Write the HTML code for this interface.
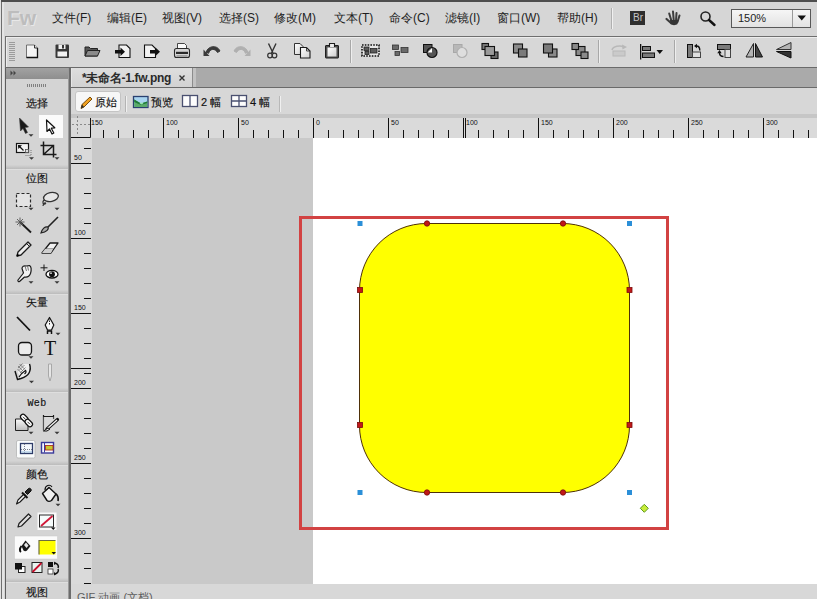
<!DOCTYPE html>
<html><head><meta charset="utf-8">
<style>
*{box-sizing:border-box}
html,body{margin:0;padding:0}
body{width:817px;height:599px;overflow:hidden;position:relative;background:#d5d5d5;font-family:"Liberation Sans",sans-serif;font-size:12px;color:#222}
.a{position:absolute}
.mi{position:absolute;top:11px;font-size:12px;line-height:14px;color:#1e1e1e;white-space:nowrap}
.lbl{position:absolute;left:6px;width:62px;text-align:center;font-size:11px;line-height:12px;color:#111;-webkit-text-stroke:0.15px #111}
.sep{position:absolute;left:6px;width:62px;height:5px;background:linear-gradient(#d3d3d3,#bcbcbc 78%,#dedede 78%)}
.rl{position:absolute;font-size:7px;line-height:8px;color:#111}
.sb{position:absolute;top:95px;font-size:11px;line-height:14px;color:#111;-webkit-text-stroke:0.15px #111;white-space:nowrap}
svg{position:absolute;left:0;top:0;overflow:visible}
</style></head><body>
<!-- frame -->
<div class="a" style="left:0;top:0;width:817px;height:36px;background:#d6d6d6"></div>
<div class="a" style="left:0;top:0;width:817px;height:2px;background:#4e4e4e"></div>
<div class="a" style="left:0;top:0;width:1px;height:599px;background:#e2e2e2"></div>
<div class="a" style="left:1px;top:2px;width:1px;height:597px;background:#6e6e6e"></div>
<div class="a" style="left:5px;top:36px;width:812px;height:31px;background:#d7d7d7;border-top:1px solid #6e6e6e;border-left:1px solid #6e6e6e"></div>
<div class="a" style="left:6px;top:37px;width:811px;height:1px;background:#ececec"></div>
<div class="a" style="left:6px;top:37px;width:1px;height:30px;background:#ececec"></div>
<div class="a" style="left:2px;top:2px;width:2px;height:597px;background:#e4e4e4"></div>
<div class="a" style="left:5px;top:67px;width:812px;height:1px;background:#6a6a6a"></div>
<!-- left panel -->
<div class="a" style="left:5px;top:68px;width:1px;height:531px;background:#5e5e5e"></div>
<div class="a" style="left:6px;top:68px;width:62px;height:531px;background:#d4d4d4"></div>
<div class="a" style="left:6px;top:68px;width:62px;height:11px;background:linear-gradient(#a2a2a2,#8e8e8e)"></div>
<div class="a" style="left:68px;top:68px;width:1px;height:531px;background:#9a9a9a"></div>
<div class="a" style="left:69px;top:68px;width:2px;height:531px;background:#6c6c6c"></div>
<!-- doc area -->
<div class="a" style="left:71px;top:68px;width:746px;height:19px;background:#aaaaaa"></div>
<div class="a" style="left:71px;top:68px;width:121px;height:19px;background:linear-gradient(#dedede,#d2d2d2)"></div>
<div class="a" style="left:71px;top:87px;width:746px;height:1px;background:#6a6a6a"></div>
<div class="a" style="left:192px;top:68px;width:1px;height:19px;background:#8c8c8c"></div>
<div class="a" style="left:71px;top:88px;width:746px;height:26px;background:#d7d7d7"></div>
<div class="a" style="left:71px;top:114px;width:746px;height:4px;background:#c6c6c6"></div>
<div class="a" style="left:71px;top:118px;width:746px;height:20px;background:#dadada"></div>
<div class="a" style="left:71px;top:138px;width:21px;height:446px;background:#dadada"></div>
<div class="a" style="left:92px;top:138px;width:221px;height:446px;background:#c9c9c9"></div>
<div class="a" style="left:313px;top:138px;width:504px;height:446px;background:#fff"></div>
<div class="a" style="left:71px;top:584px;width:746px;height:15px;background:#d8d8d8"></div>

<!-- menu -->
<div class="mi" style="left:52px">文件(F)</div>
<div class="mi" style="left:107px">编辑(E)</div>
<div class="mi" style="left:162px">视图(V)</div>
<div class="mi" style="left:219px">选择(S)</div>
<div class="mi" style="left:274px">修改(M)</div>
<div class="mi" style="left:334px">文本(T)</div>
<div class="mi" style="left:389px">命令(C)</div>
<div class="mi" style="left:445px">滤镜(I)</div>
<div class="mi" style="left:497px">窗口(W)</div>
<div class="mi" style="left:557px">帮助(H)</div>

<!-- left panel labels -->
<div class="lbl" style="top:97px">选择</div>
<div class="sep" style="top:165px"></div>
<div class="lbl" style="top:172px">位图</div>
<div class="sep" style="top:290px"></div>
<div class="lbl" style="top:296px">矢量</div>
<div class="sep" style="top:388px"></div>
<div class="lbl" style="top:398px;font-size:10px;letter-spacing:0.3px;font-family:'Liberation Mono',monospace">Web</div>
<div class="sep" style="top:461px"></div>
<div class="lbl" style="top:468px">颜色</div>
<div class="sep" style="top:578px"></div>
<div class="lbl" style="top:586px">视图</div>

<!-- canvas objects -->
<svg width="817" height="599" viewBox="0 0 817 599">
  <rect x="300.5" y="217.5" width="367" height="311" fill="none" stroke="#d24242" stroke-width="3"/>
  <rect x="359.5" y="223.5" width="270" height="269" rx="67" ry="67" fill="#ffff00" stroke="#4e3008" stroke-width="1"/>
  <g fill="#c01818" stroke="#7a0c0c" stroke-width="0.8">
    <rect x="357.5" y="287.5" width="5" height="5"/><rect x="357.5" y="422.5" width="5" height="5"/>
    <rect x="627" y="287.5" width="5" height="5"/><rect x="627" y="422.5" width="5" height="5"/>
    <circle cx="427" cy="223.5" r="2.7"/><circle cx="563" cy="223.5" r="2.7"/>
    <circle cx="427" cy="492.5" r="2.7"/><circle cx="563" cy="492.5" r="2.7"/>
  </g>
  <g fill="#2b8fd8">
    <rect x="357.5" y="221" width="5" height="5"/><rect x="627" y="221" width="5" height="5"/>
    <rect x="357.5" y="490" width="5" height="5"/><rect x="627" y="490" width="5" height="5"/>
  </g>
  <path d="M644.3 504.3 L648.3 508.3 L644.3 512.3 L640.3 508.3 Z" fill="#c8ec3a" stroke="#5f9a1c" stroke-width="1"/>
</svg>
<!-- rulers -->
<svg width="817" height="599" viewBox="0 0 817 599">
 <g fill="#111"><rect x="103" y="130" width="1" height="8"/><rect x="118" y="130" width="1" height="8"/><rect x="133" y="130" width="1" height="8"/><rect x="148" y="130" width="1" height="8"/><rect x="163" y="118" width="1" height="20"/><rect x="178" y="130" width="1" height="8"/><rect x="193" y="130" width="1" height="8"/><rect x="208" y="130" width="1" height="8"/><rect x="223" y="130" width="1" height="8"/><rect x="238" y="118" width="1" height="20"/><rect x="253" y="130" width="1" height="8"/><rect x="268" y="130" width="1" height="8"/><rect x="283" y="130" width="1" height="8"/><rect x="298" y="130" width="1" height="8"/><rect x="313" y="118" width="1" height="20"/><rect x="328" y="130" width="1" height="8"/><rect x="343" y="130" width="1" height="8"/><rect x="358" y="130" width="1" height="8"/><rect x="373" y="130" width="1" height="8"/><rect x="388" y="118" width="1" height="20"/><rect x="403" y="130" width="1" height="8"/><rect x="418" y="130" width="1" height="8"/><rect x="433" y="130" width="1" height="8"/><rect x="448" y="130" width="1" height="8"/><rect x="463" y="118" width="1" height="20"/><rect x="478" y="130" width="1" height="8"/><rect x="493" y="130" width="1" height="8"/><rect x="508" y="130" width="1" height="8"/><rect x="523" y="130" width="1" height="8"/><rect x="538" y="118" width="1" height="20"/><rect x="553" y="130" width="1" height="8"/><rect x="568" y="130" width="1" height="8"/><rect x="583" y="130" width="1" height="8"/><rect x="598" y="130" width="1" height="8"/><rect x="613" y="118" width="1" height="20"/><rect x="628" y="130" width="1" height="8"/><rect x="643" y="130" width="1" height="8"/><rect x="658" y="130" width="1" height="8"/><rect x="673" y="130" width="1" height="8"/><rect x="688" y="118" width="1" height="20"/><rect x="703" y="130" width="1" height="8"/><rect x="718" y="130" width="1" height="8"/><rect x="733" y="130" width="1" height="8"/><rect x="748" y="130" width="1" height="8"/><rect x="763" y="118" width="1" height="20"/><rect x="778" y="130" width="1" height="8"/><rect x="793" y="130" width="1" height="8"/><rect x="808" y="130" width="1" height="8"/><rect x="465" y="118" width="1" height="20"/><rect x="84" y="148" width="7" height="1"/><rect x="71" y="163" width="20" height="1"/><rect x="84" y="178" width="7" height="1"/><rect x="84" y="193" width="7" height="1"/><rect x="84" y="208" width="7" height="1"/><rect x="84" y="223" width="7" height="1"/><rect x="71" y="238" width="20" height="1"/><rect x="84" y="253" width="7" height="1"/><rect x="84" y="268" width="7" height="1"/><rect x="84" y="283" width="7" height="1"/><rect x="84" y="298" width="7" height="1"/><rect x="71" y="313" width="20" height="1"/><rect x="84" y="328" width="7" height="1"/><rect x="84" y="343" width="7" height="1"/><rect x="84" y="358" width="7" height="1"/><rect x="84" y="373" width="7" height="1"/><rect x="71" y="388" width="20" height="1"/><rect x="84" y="403" width="7" height="1"/><rect x="84" y="418" width="7" height="1"/><rect x="84" y="433" width="7" height="1"/><rect x="84" y="448" width="7" height="1"/><rect x="71" y="463" width="20" height="1"/><rect x="84" y="478" width="7" height="1"/><rect x="84" y="493" width="7" height="1"/><rect x="84" y="508" width="7" height="1"/><rect x="84" y="523" width="7" height="1"/><rect x="71" y="538" width="20" height="1"/><rect x="84" y="553" width="7" height="1"/><rect x="84" y="568" width="7" height="1"/><rect x="84" y="583" width="7" height="1"/><rect x="71" y="368" width="20" height="1"/></g>
 <rect x="71" y="118" width="20" height="20" fill="#dadada"/>
 <path d="M90.5 118 L90.5 137.5 L71 137.5" stroke="#111" stroke-width="1" fill="none"/>
 <path d="M77.5 116 L77.5 136 M72 124.5 L90 124.5" stroke="#8a8a8a" stroke-width="1" stroke-dasharray="2 2" fill="none"/>
</svg>
<div class="rl" style="left:91px;top:119px">150</div>
<div class="rl" style="left:166px;top:119px">100</div>
<div class="rl" style="left:241px;top:119px">50</div>
<div class="rl" style="left:316px;top:119px">0</div>
<div class="rl" style="left:391px;top:119px">50</div>
<div class="rl" style="left:466px;top:119px">100</div>
<div class="rl" style="left:541px;top:119px">150</div>
<div class="rl" style="left:616px;top:119px">200</div>
<div class="rl" style="left:691px;top:119px">250</div>
<div class="rl" style="left:766px;top:119px">300</div>
<div class="rl" style="left:74px;top:154px">50</div>
<div class="rl" style="left:74px;top:229px">100</div>
<div class="rl" style="left:74px;top:304px">150</div>
<div class="rl" style="left:74px;top:379px">200</div>
<div class="rl" style="left:74px;top:454px">250</div>
<div class="rl" style="left:74px;top:529px">300</div>
<!-- tab -->
<div class="a" style="left:71px;top:68px;width:1px;height:19px;background:#e6e6e6"></div>
<div class="a" style="left:82px;top:71px;font-size:12px;line-height:14px;font-weight:bold;letter-spacing:-0.3px;color:#2a2a2a;white-space:nowrap">*未命名-1.fw.png</div>
<svg width="817" height="599" viewBox="0 0 817 599"><path d="M179.5 75.5 L184.5 80.5 M184.5 75.5 L179.5 80.5" stroke="#333" stroke-width="1.4"/></svg>
<div class="a" style="left:193px;top:68px;width:3px;height:19px;background:#c2c2c2"></div>
<!-- subbar -->
<div class="a" style="left:75px;top:91px;width:46px;height:21px;background:#f7f7f7;border:1px solid #c4c4c4;border-radius:3px"></div>
<div class="sb" style="left:95px">原始</div>
<div class="sb" style="left:151px">预览</div>
<div class="sb" style="left:201px">2 幅</div>
<div class="sb" style="left:250px">4 幅</div>
<div class="a" style="left:125px;top:96px;width:1px;height:16px;background:#b4b4b4"></div><div class="a" style="left:126px;top:96px;width:1px;height:16px;background:#f0f0f0"></div>
<div class="a" style="left:279px;top:96px;width:1px;height:16px;background:#b8b8b8"></div><div class="a" style="left:280px;top:96px;width:1px;height:16px;background:#f0f0f0"></div>
<svg width="817" height="599" viewBox="0 0 817 599">
  <path d="M81 108.5 L82 104.5 L90 97 L92 99 L84 107 Z" fill="#f0a020" stroke="#6a4000" stroke-width="0.9" stroke-linejoin="round"/>
  <path d="M81 108.5 L82 104.5 L84 107 Z" fill="#2a2a2a"/>
  <rect x="133.5" y="96.5" width="14.5" height="11" fill="#a8d4f0" stroke="#2a4070" stroke-width="1.3"/>
  <path d="M134.2 99.5 L141 103.5 L147.3 101.5 L147.3 107 L134.2 107 Z" fill="#5aaa6a"/>
  <path d="M134.2 99.5 L141 103.5 L147.3 101.5 L147.3 103 L141 105 L134.2 102 Z" fill="#1e7a38"/>
  <path d="M139.5 103 L142 102.6 L143.5 104 L141 104.6 Z" fill="#9ae8b0"/>
  <rect x="182.5" y="95.5" width="15" height="11" fill="#fdfdfd" stroke="#4a5070" stroke-width="1.3"/>
  <path d="M190 95.5 L190 106.5" stroke="#4a5070" stroke-width="1.3"/>
  <rect x="231.5" y="95.5" width="15" height="11" fill="#fdfdfd" stroke="#4a5070" stroke-width="1.3"/>
  <path d="M239 95.5 L239 106.5 M231.5 101 L246.5 101" stroke="#4a5070" stroke-width="1.3"/>
</svg>
<!-- status -->
<div class="a" style="left:77px;top:591px;font-size:11px;line-height:12px;color:#5e5e5e;white-space:nowrap">GIF 动画 (文档)</div>

<!-- menubar extras + toolbar icons -->
<div class="a" style="left:7px;top:6px;font-family:'Liberation Sans',sans-serif;font-weight:bold;font-size:21px;line-height:24px;color:#bdbdbd;letter-spacing:0px;text-shadow:1px 1px 0 #e8e8e8">Fw</div>
<div class="a" style="left:611px;top:8px;width:1px;height:21px;background:#b0b0b0"></div>
<div class="a" style="left:612px;top:8px;width:1px;height:21px;background:#f0f0f0"></div>
<div class="a" style="left:630px;top:11px;width:15px;height:14px;background:#2e2e2e"></div>
<div class="a" style="left:631px;top:11px;width:14px;font-size:10px;line-height:14px;color:#c4c4c4;text-align:center">Br</div>
<div class="a" style="left:731px;top:9px;width:80px;height:19px;border:1px solid #585858;background:linear-gradient(#f6f6f6,#e2e2e2)"></div>
<div class="a" style="left:792px;top:10px;width:1px;height:17px;background:#9a9a9a"></div>
<div class="a" style="left:738px;top:11px;font-size:11px;line-height:14px;color:#1e1e1e">150%</div>
<svg width="817" height="599" viewBox="0 0 817 599">
  <!-- hand -->
  <g stroke="#3c3c3c" stroke-linecap="round" fill="none">
   <path d="M666.5 19 L671 23" stroke-width="2.2"/>
   <path d="M669.2 13.5 L671.5 21" stroke-width="2"/>
   <path d="M673 11.5 L673.8 21" stroke-width="2"/>
   <path d="M676.5 13 L676 21" stroke-width="2"/>
   <path d="M679.5 15.5 L677.5 22" stroke-width="2"/>
  </g>
  <path d="M670 20 L678.5 20 L677.5 24 C676 25.5 672 25.5 670.5 24 Z" fill="#353535"/>
  <!-- zoom -->
  <circle cx="705.5" cy="16.5" r="4.5" fill="none" stroke="#222" stroke-width="1.6"/>
  <path d="M709 20 L714.5 25" stroke="#111" stroke-width="2.4" stroke-linecap="round"/>
  <!-- dropdown arrow -->
  <path d="M797.5 15.5 L806 15.5 L801.75 20.5 Z" fill="#111"/>

  <!-- toolbar gripper -->
  <g fill="#9c9c9c"><rect x="9" y="42" width="6" height="1"/><rect x="9" y="44" width="6" height="1"/><rect x="9" y="46" width="6" height="1"/><rect x="9" y="48" width="6" height="1"/><rect x="9" y="50" width="6" height="1"/><rect x="9" y="52" width="6" height="1"/><rect x="9" y="54" width="6" height="1"/><rect x="9" y="56" width="6" height="1"/><rect x="9" y="58" width="6" height="1"/><rect x="9" y="60" width="6" height="1"/></g>
  <!-- new -->
  <path d="M26.5 45 L34.5 45 L37.5 48 L37.5 57.5 L26.5 57.5 Z" fill="#f4f4f4" stroke="#555" stroke-width="0.8"/>
  <path d="M37.5 48 L37.5 57.5 L26.5 57.5" fill="none" stroke="#111" stroke-width="1.3"/>
  <path d="M34.5 45 L34.5 48 L37.5 48" fill="#ddd" stroke="#222" stroke-width="0.9"/>
  <!-- save -->
  <rect x="55.5" y="44.5" width="13.5" height="13.5" rx="1" fill="#383838"/>
  <rect x="58.5" y="44.5" width="7" height="4.5" fill="#f0f0f0"/><rect x="62" y="45" width="2" height="3.5" fill="#383838"/>
  <rect x="57.5" y="51.5" width="9.5" height="5" fill="#f2f2f2"/>
  <!-- open -->
  <path d="M85 47 L89 47 L90.5 48.5 L97.5 48.5 L97.5 56 L85 56 Z" fill="#555" stroke="#222" stroke-width="1"/>
  <path d="M85 56 L87.5 50.5 L100 50.5 L97.5 56 Z" fill="#8a8a8a" stroke="#222" stroke-width="1"/>
  <!-- import -->
  <path d="M119 45 L126.5 45 L130 48.5 L130 57.5 L119 57.5 Z" fill="#f2f2f2" stroke="#111" stroke-width="1.1"/>
  <path d="M115 50 L120.5 50 L120.5 47.5 L125 51.8 L120.5 56 L120.5 53.5 L115 53.5 Z" fill="#111"/>
  <!-- export -->
  <path d="M144.5 45 L152 45 L155.5 48.5 L155.5 57.5 L144.5 57.5 Z" fill="#f2f2f2" stroke="#111" stroke-width="1.1"/>
  <path d="M150 50 L155.5 50 L155.5 47.5 L160 51.8 L155.5 56 L155.5 53.5 L150 53.5 Z" fill="#111"/>
  <!-- print -->
  <path d="M177.5 48.5 L177.5 43.5 L184.5 43.5 L186.5 45.5 L186.5 48.5" fill="#fafafa" stroke="#333" stroke-width="0.9"/>
  <rect x="174.5" y="48.5" width="15" height="9" rx="2" fill="#d4d4d4" stroke="#2a2a2a" stroke-width="1.1"/>
  <rect x="176" y="51.8" width="12" height="2.2" fill="#2a2a2a"/>
  <path d="M176.5 56 L187.5 56" stroke="#777" stroke-width="1"/>
  <!-- undo -->
  <path d="M206 53 C207 46 217 44 220 51 L217.5 52.5 C215 48 210 48.5 208.5 53.5" fill="#3a3a3a" stroke="#3a3a3a" stroke-width="1"/>
  <path d="M203.5 49.5 L209.5 56 L203.5 56 Z" fill="#3a3a3a"/>
  <!-- redo disabled -->
  <path d="M248 53 C247 46 237 44 234 51 L236.5 52.5 C239 48 244 48.5 245.5 53.5" fill="#b0b0b0" stroke="#b0b0b0" stroke-width="1"/>
  <path d="M250.5 49.5 L244.5 56 L250.5 56 Z" fill="#b0b0b0"/>
  <!-- scissors -->
  <path d="M268.5 43.5 L273 53 M276 43.5 L271.5 53" stroke="#333" stroke-width="1.4"/>
  <circle cx="270" cy="55.5" r="2.3" fill="none" stroke="#333" stroke-width="1.2"/>
  <circle cx="274.5" cy="55.5" r="2.3" fill="none" stroke="#333" stroke-width="1.2"/>
  <!-- copy -->
  <defs><linearGradient id="pg" x1="0" y1="0" x2="1" y2="1"><stop offset="0" stop-color="#ffffff"/><stop offset="1" stop-color="#cfcfcf"/></linearGradient></defs>
  <path d="M294.5 43.5 L300 43.5 L303 46.5 L303 54.5 L294.5 54.5 Z" fill="url(#pg)" stroke="#333" stroke-width="1"/>
  <path d="M300.5 47.5 L306.5 47.5 L310 51 L310 58 L300.5 58 Z" fill="url(#pg)" stroke="#1a1a1a" stroke-width="1.1"/>
  <path d="M306.5 47.5 L306.5 51 L310 51" fill="none" stroke="#333" stroke-width="0.9"/>
  <!-- paste -->
  <rect x="325.5" y="45.5" width="13" height="12.5" rx="0.5" fill="#505050" stroke="#1e1e1e" stroke-width="1"/>
  <rect x="327.5" y="47.5" width="9" height="9" fill="url(#pg)"/>
  <path d="M329.5 47 L329.5 43.5 L334.5 43.5 L334.5 47" fill="#eee" stroke="#1e1e1e" stroke-width="1.1"/>
  <!-- separator -->
  <rect x="350" y="40" width="1" height="23" fill="#a8a8a8"/><rect x="351" y="40" width="1" height="23" fill="#eeeeee"/>
  <!-- group -->
  <rect x="362" y="45" width="17" height="11" fill="#e6e6e6" stroke="#111" stroke-width="1.6" stroke-dasharray="1.6 1.2"/>
  <rect x="364" y="47" width="5" height="3.5" fill="#5a5a5a" stroke="#222" stroke-width="0.8"/>
  <rect x="370.5" y="48.5" width="6.5" height="4.5" fill="#5a5a5a" stroke="#222" stroke-width="0.8"/>
  <rect x="365" y="51.5" width="4" height="3" fill="#5a5a5a" stroke="#222" stroke-width="0.8"/>
  <!-- ungroup -->
  <rect x="392.5" y="45" width="6" height="4.5" fill="#6a6a6a" stroke="#333" stroke-width="0.8"/>
  <rect x="401" y="47.5" width="7" height="5" fill="#6a6a6a" stroke="#333" stroke-width="0.8"/>
  <rect x="395" y="51.5" width="4.5" height="4" fill="#6a6a6a" stroke="#333" stroke-width="0.8"/>
  <!-- combine -->
  <rect x="423.5" y="44.5" width="8.5" height="8" fill="#555" stroke="#111" stroke-width="1"/>
  <circle cx="432" cy="52.5" r="5" fill="#555" stroke="#111" stroke-width="1.2"/>
  <path d="M427.5 52.5 L432 48 L432 52.5 Z" fill="#fff"/>
  <!-- disabled combine -->
  <rect x="453.5" y="44.5" width="8.5" height="8" fill="#b8b8b8" stroke="#a8a8a8" stroke-width="1"/>
  <circle cx="462" cy="52.5" r="5" fill="#dedede" stroke="#b0b0b0" stroke-width="1.2"/>
  <!-- arrange icons -->
  <g stroke="#111" stroke-width="1.1">
  <rect x="482" y="43.5" width="6.5" height="6" fill="#7a7a7a"/><rect x="491" y="52" width="7" height="6.5" fill="#6a6a6a"/><rect x="485" y="46.5" width="9.5" height="9" fill="#9a9a9a"/>
  <rect x="513.5" y="44" width="9" height="9" fill="#8a8a8a"/><rect x="518.5" y="49" width="8.5" height="8" fill="#7a7a7a"/>
  <rect x="548.5" y="49" width="8.5" height="8" fill="#8a8a8a"/><rect x="543.5" y="44" width="9" height="9" fill="#7a7a7a"/>
  <rect x="576" y="46.5" width="9" height="9" fill="#8a8a8a"/><rect x="572" y="43.5" width="6.5" height="6" fill="#8a8a8a"/><rect x="581" y="52" width="7" height="6.5" fill="#8a8a8a"/>
  </g>
  <rect x="598" y="40" width="1" height="23" fill="#a8a8a8"/><rect x="599" y="40" width="1" height="23" fill="#eeeeee"/>
  <!-- disabled icon -->
  <path d="M612 50 C613 46 620 45 624 47" stroke="#b8b8b8" stroke-width="1.5" fill="none"/>
  <path d="M622 44.5 L627 47 L622.5 49.5 Z" fill="#b8b8b8"/>
  <rect x="613" y="51" width="12" height="5" fill="#cacaca" stroke="#b8b8b8" stroke-width="1"/>
  <!-- align -->
  <rect x="640" y="44" width="1.3" height="15.5" fill="#111"/>
  <rect x="642.5" y="46.5" width="8" height="4" fill="#7a7a7a" stroke="#111" stroke-width="1"/>
  <rect x="642.5" y="53" width="12" height="4.5" fill="#7a7a7a" stroke="#111" stroke-width="1"/>
  <path d="M656.5 50 L663 50 L659.75 54 Z" fill="#111"/>
  <rect x="674" y="40" width="1" height="23" fill="#a8a8a8"/><rect x="675" y="40" width="1" height="23" fill="#eeeeee"/>
  <!-- rotate 1 -->
  <rect x="687.5" y="44.5" width="5" height="13" fill="#7a7a7a" stroke="#111" stroke-width="1"/>
  <rect x="692.5" y="52" width="8" height="5.5" fill="#e0e0e0" stroke="#444" stroke-width="1"/>
  <path d="M696.5 46 C699 46 699.8 47.5 699.8 50.5" stroke="#111" stroke-width="1.4" fill="none"/>
  <path d="M694 46 L697 43.8 L697 48.2 Z" fill="#111"/>
  <!-- rotate 2 -->
  <rect x="717.5" y="44.5" width="13" height="5" fill="#7a7a7a" stroke="#111" stroke-width="1"/>
  <rect x="725" y="49.5" width="5.5" height="8" fill="#e0e0e0" stroke="#444" stroke-width="1"/>
  <path d="M719.5 52.5 C719.5 55.5 720.5 56.5 723.5 56.5" stroke="#111" stroke-width="1.4" fill="none"/>
  <path d="M719.5 50 L717.3 53.2 L721.7 53.2 Z" fill="#111"/>
  <!-- flip h -->
  <path d="M753.5 43.5 L753.5 57 L746 57 Z" fill="#b4b4b4" stroke="#222" stroke-width="1"/>
  <path d="M755.5 43.5 L755.5 57 L762.5 57 Z" fill="#444" stroke="#111" stroke-width="1"/>
  <!-- flip v -->
  <path d="M791 42.5 L791 49.5 L776.5 49.5 Z" fill="#b4b4b4" stroke="#333" stroke-width="1"/>
  <path d="M791 51.5 L791 58 L776.5 51.5 Z" fill="#333" stroke="#111" stroke-width="1"/>
</svg>

<!-- left panel icons -->
<svg width="817" height="599" viewBox="0 0 817 599">
 <g id="lpicons">
  <!-- gripper -->
  <g fill="#808080"><rect x="27" y="84" width="1" height="3"/><rect x="29" y="84" width="1" height="3"/><rect x="31" y="84" width="1" height="3"/><rect x="33" y="84" width="1" height="3"/><rect x="35" y="84" width="1" height="3"/><rect x="37" y="84" width="1" height="3"/><rect x="39" y="84" width="1" height="3"/><rect x="41" y="84" width="1" height="3"/><rect x="43" y="84" width="1" height="3"/><rect x="45" y="84" width="1" height="3"/></g>
  <!-- header >> -->
  <path d="M10.5 70.5 L13 73 L10.5 75.5 Z M13.5 70.5 L16 73 L13.5 75.5 Z" fill="#454545"/>
  <!-- pointer -->
  <path d="M19.5 118 L20.5 131 L23 128.5 L25.5 133.5 L27.5 132.5 L25 127.5 L28.5 127 Z" fill="#1a1a1a" stroke="#3a3a3a" stroke-width="0.6" stroke-linejoin="round"/>
  <path d="M28.5 134.2 L33.5 134.2 L31.0 136.7 Z" fill="#3a3a3a"/>
  <!-- subselect white box -->
  <rect x="39" y="115" width="24" height="23" fill="#fbfbfb"/>
  <path d="M46.5 120 L47 131.5 L49.5 129 L52 134 L53.8 133 L51.3 128.2 L54.8 127.8 Z" fill="#fff" stroke="#111" stroke-width="1.2" stroke-linejoin="round"/>
  <!-- scale -->
  <rect x="16.5" y="143.5" width="12" height="9" fill="#f4f4f4" stroke="#151515" stroke-width="1.2"/>
  <path d="M18.5 145.5 L23.5 150.5" stroke="#111" stroke-width="1.3" fill="none"/>
  <path d="M18 145 L22 145.3 L18.3 149 Z" fill="#111"/>
  <rect x="25.5" y="149.5" width="3" height="3" fill="#ddd" stroke="#555" stroke-width="0.8"/>
  <path d="M25.5 155.5 L31 155.5 L31 149" stroke="#777" stroke-width="1" stroke-dasharray="1 1" fill="none"/>
  <path d="M29.0 157.2 L34.0 157.2 L31.5 159.7 Z" fill="#3a3a3a"/>
  <!-- crop -->
  <path d="M43.5 141.5 L43.5 154.5 L56.5 154.5 M40.5 145.5 L53.5 145.5 L53.5 157.5 M43.5 154.5 L53.5 145.5" stroke="#1a1a1a" stroke-width="1.5" fill="none"/>
  <path d="M54.5 157.2 L59.5 157.2 L57.0 159.7 Z" fill="#3a3a3a"/>
  <!-- marquee -->
  <rect x="16.5" y="193.5" width="14" height="13" fill="#e4e4e4" stroke="#2a2a2a" stroke-width="1.2" stroke-dasharray="3 2"/>
  <path d="M28.5 207.7 L33.5 207.7 L31.0 210.2 Z" fill="#3a3a3a"/>
  <!-- lasso -->
  <ellipse cx="51" cy="197" rx="7.5" ry="4.5" fill="#e6e6e6" stroke="#333" stroke-width="1.3" transform="rotate(-12 51 197)"/>
  <path d="M44 200 C42 202 43 205 45 204 C47 203 44 201 43 206" stroke="#333" stroke-width="1.2" fill="none"/>
  <path d="M54.5 207.7 L59.5 207.7 L57.0 210.2 Z" fill="#3a3a3a"/>
  <!-- wand -->
  <path d="M20 222 L31 232.5" stroke="#1a1a1a" stroke-width="1.8"/>
  <path d="M17 219 L23 225 M23 219 L17 225 M20 217.5 L20 226.5 M15.5 222 L24.5 222" stroke="#555" stroke-width="0.9"/>
  <!-- brush -->
  <path d="M58 217 L47 228" stroke="#222" stroke-width="1.6"/>
  <path d="M41 233 C42 229 45 226 48 227 C49 229 47 232 41 233 Z" fill="#aaa" stroke="#222" stroke-width="1.2"/>
  <!-- pencil -->
  <path d="M17 256 L18 252 L28 242 L31 245 L21 255 Z" fill="#eee" stroke="#1a1a1a" stroke-width="1.3" stroke-linejoin="round"/>
  <path d="M26.5 243.5 L29.5 246.5" stroke="#222" stroke-width="1"/>
  <path d="M17 256 L18.5 254.5" stroke="#000" stroke-width="2"/>
  <!-- eraser -->
  <path d="M42 253 L50 243 L58 243 L51 253 Z" fill="#f2f2f2" stroke="#1a1a1a" stroke-width="1.3" stroke-linejoin="round"/>
  <path d="M45 249 L53 249" stroke="#555" stroke-width="1"/>
  <path d="M42 253 L45 249 L53 249 L51 253 Z" fill="#cfcfcf"/>
  <!-- blur (finger) -->
  <path d="M18 280 L23.5 273 L22 268.5 C22 266.5 24 265.5 26 266 L29.5 265.5 C31 266.5 31.5 270 30.5 273.5 C29.5 276 27 277.5 24.5 277 L19.5 281.5 C18.5 282 17.5 281 18 280 Z" fill="#f2f2f2" stroke="#1a1a1a" stroke-width="1.2" stroke-linejoin="round"/>
  <path d="M25 266 L26.5 271 M27.5 265.8 L28.5 270.5" stroke="#555" stroke-width="0.8"/>
  <path d="M28.5 281.2 L33.5 281.2 L31.0 283.7 Z" fill="#3a3a3a"/>
  <!-- red eye -->
  <path d="M44 264.5 L44 271 M40.5 267.8 L47.5 267.8" stroke="#1a1a1a" stroke-width="1"/>
  <ellipse cx="52" cy="274.2" rx="6" ry="3.8" fill="#fff" stroke="#111" stroke-width="1.3"/>
  <circle cx="52" cy="274.2" r="2.9" fill="#111"/>
  <circle cx="51" cy="273.2" r="0.9" fill="#ddd"/>
  <path d="M54.5 281.2 L59.5 281.2 L57.0 283.7 Z" fill="#3a3a3a"/>
  <!-- line -->
  <path d="M17 317 L30 330.5" stroke="#111" stroke-width="1.8"/>
  <!-- pen -->
  <path d="M49.5 317.5 L53.8 325 L51.5 330 L47.5 330 L45.2 325 Z" fill="#f6f6f6" stroke="#111" stroke-width="1.2" stroke-linejoin="round"/>
  <path d="M49.5 318 L49.5 325" stroke="#222" stroke-width="1" stroke-dasharray="1.5 1"/>
  <path d="M47.5 330.5 L47.5 334 M51.5 330.5 L51.5 334 M47 331 L52 331" stroke="#111" stroke-width="1.5"/>
  <path d="M55.5 332.7 L60.5 332.7 L58.0 335.2 Z" fill="#3a3a3a"/>
  <!-- rounded rect -->
  <rect x="18.5" y="342.5" width="13" height="12.5" rx="3.5" fill="#ececec" stroke="#151515" stroke-width="1.3"/>
  <path d="M28.5 356.2 L33.5 356.2 L31.0 358.7 Z" fill="#3a3a3a"/>
  <!-- freeform -->
  <path d="M17.5 372 L24 364 L29.5 364 C30.5 367 30.5 371 28.5 374 C26.5 376.5 23.5 377.5 21 378.5 Z" fill="#f0f0f0"/>
  <path d="M18 366 L23 371 M19.5 364 L25 369.5 M17.5 369 L22 373.5 M22.5 363.5 L18 368 M24.5 365 L19 370.5 M25.5 367.5 L20 373" stroke="#666" stroke-width="0.7"/>
  <path d="M15 371 L17.5 379.5 L21 378.5 C24 377.5 27.5 376 29 373 C30.5 370 30.5 366.5 29.5 364" stroke="#111" stroke-width="1.4" fill="none" stroke-linejoin="round"/>
  <path d="M19 377 C21 374 23 372 25.5 370.5 C26.5 371.5 26 373 24.5 374" stroke="#111" stroke-width="1.2" fill="none"/>
  <path d="M29.0 380.7 L34.0 380.7 L31.5 383.2 Z" fill="#3a3a3a"/>
  <!-- knife (disabled) -->
  <path d="M48.5 364 L51.5 364 L51.5 376 L50 381 L48.5 376 Z" fill="#e6e6e6" stroke="#a8a8a8" stroke-width="1"/>
  <!-- hotspot -->
  <defs><linearGradient id="hg" x1="0" y1="0" x2="0" y2="1"><stop offset="0" stop-color="#fafafa"/><stop offset="1" stop-color="#bdbdbd"/></linearGradient></defs>
  <path d="M15.5 419 L22 419 L28 425 L28 430.5 L15.5 430.5 Z" fill="url(#hg)" stroke="#222" stroke-width="1"/>
  <g fill="#fff" stroke="#111" stroke-width="1.2">
   <rect x="20" y="415.5" width="8.5" height="5" rx="2.5" transform="rotate(45 24.25 418)"/>
   <rect x="24.5" y="420.5" width="8.5" height="5" rx="2.5" transform="rotate(45 28.75 423)"/>
  </g>
  <path d="M23 416.8 L25.5 419.3 M27.5 421.8 L30 424.3" stroke="#333" stroke-width="1"/>
  <path d="M28.5 431.7 L33.5 431.7 L31.0 434.2 Z" fill="#3a3a3a"/>
  <!-- slice -->
  <path d="M43 416.5 L53.5 416.5 M43.5 415 L43.5 430.5 M53.5 415 L53.5 419" stroke="#1a1a1a" stroke-width="1.2" fill="none"/>
  <rect x="43.5" y="417" width="10" height="13" fill="#dcdcdc" opacity="0.6"/>
  <path d="M57.5 419.5 L47 429" stroke="#111" stroke-width="3.2" stroke-linecap="round"/>
  <path d="M57 420 L47.5 428.5" stroke="#f2f2f2" stroke-width="1.4"/>
  <path d="M48 428 L43.5 431 L47 431 L50 429 Z" fill="#eee" stroke="#111" stroke-width="1"/>
  <path d="M54.5 431.7 L59.5 431.7 L57.0 434.2 Z" fill="#3a3a3a"/>
  <!-- hide slices -->
  <rect x="16.5" y="440.5" width="18.5" height="17.5" rx="1.5" fill="#fafcfc" stroke="#b4b4b4" stroke-width="0.8"/>
  <rect x="20.5" y="443.5" width="12" height="10" fill="#f4f8fc" stroke="#2e3c68" stroke-width="1.3"/>
  <path d="M21 449.5 L32 449.5 M24.5 444 L24.5 453" stroke="#6a7080" stroke-width="0.9" stroke-dasharray="1 1"/>
  <path d="M21 452 L32 452" stroke="#9ac0e0" stroke-width="1"/>
  <!-- show slices -->
  <rect x="41.5" y="442.5" width="12" height="10.5" fill="#f8f8ff" stroke="#3a3a9a" stroke-width="1.4"/>
  <rect x="45.5" y="445.5" width="7.5" height="4.5" fill="#c8c830" stroke="#b03020" stroke-width="0.9"/>
  <path d="M44.5 443 L44.5 452.5" stroke="#3a3a9a" stroke-width="1"/>
  <!-- eyedropper -->
  <path d="M16.5 504 L18 500 L24 494 L26 496 L20 502 Z" fill="#f4f4f4" stroke="#1a1a1a" stroke-width="1.1" stroke-linejoin="round"/>
  <path d="M22 492.5 L27.5 498" stroke="#111" stroke-width="2"/>
  <path d="M25 492 L28.5 488.5 C30 487.5 32 489.5 31 491 L27.5 494.5 Z" fill="#222" stroke="#111" stroke-width="1"/>
  <!-- bucket -->
  <path d="M42.5 493.5 L49 487.5 L56 494 L51.5 500.5 C50 501.5 48 501.5 47 500.5 Z" fill="#f0f0f0" stroke="#111" stroke-width="1.4" stroke-linejoin="round"/>
  <path d="M42.5 493.5 C44 491 48 489 49 487.5" stroke="#111" stroke-width="1" fill="#cfcfcf"/>
  <path d="M45 490 C45 485 50 484 52 487" stroke="#111" stroke-width="1.2" fill="none"/>
  <path d="M56 494 C58 495.5 58.5 498 58 501" stroke="#111" stroke-width="1.6" fill="none"/>
  <path d="M55.5 503.7 L60.5 503.7 L58.0 506.2 Z" fill="#3a3a3a"/>
  <!-- stroke pencil -->
  <path d="M18 527 L19 523.5 L28.5 514 L31 516.5 L21.5 526 Z" fill="#e0e0e0" stroke="#222" stroke-width="1.2" stroke-linejoin="round"/>
  <!-- stroke swatch -->
  <rect x="37.5" y="512.5" width="19" height="17.5" fill="#fafafa"/>
  <rect x="39.5" y="515" width="14" height="12" fill="#f6fbfb" stroke="#2a2a2a" stroke-width="1"/>
  <path d="M41 526 L52.5 516" stroke="#d01838" stroke-width="1.8"/>
  <path d="M51 527.5 L55.5 527.5 L53.25 530 Z" fill="#111"/>
  <!-- fill box -->
  <rect x="14.5" y="536" width="43" height="23" fill="#fbfbfb" stroke="#c8c8c8" stroke-width="0.5"/>
  <path d="M21.5 546 L25.5 540.5 L30.5 546 L27 550.5 C26 551.5 24.5 551.5 23.5 550.5 Z" fill="#1a1a1a"/>
  <path d="M24 545 L26 542.5 L28.5 545.5 L26.5 548 Z" fill="#e8e8e8"/>
  <path d="M21.5 546 C19.5 548.5 19.5 551 21 552" stroke="#111" stroke-width="2" fill="none"/>
  <rect x="39" y="540.5" width="16.5" height="14" fill="#ffff00"/>
  <path d="M39 554.5 L39 540.5 L55.5 540.5" stroke="#6e6e40" stroke-width="1.2" fill="none"/>
  <path d="M51.5 552 L56 552 L53.75 554.5 Z" fill="#111"/>
  <!-- default colors -->
  <rect x="18.5" y="566.5" width="6.5" height="6" fill="#fff" stroke="#222" stroke-width="1"/>
  <rect x="15" y="563" width="7" height="6.5" fill="#111"/>
  <!-- no stroke -->
  <rect x="32" y="562.5" width="10" height="10" fill="#e8f4f0" stroke="#222" stroke-width="1"/>
  <path d="M32.5 572 L41.5 563" stroke="#c8102e" stroke-width="1.8"/>
  <!-- swap -->
  <rect x="48" y="562" width="5" height="5" fill="#111"/>
  <rect x="48" y="569" width="5" height="5" fill="#fff" stroke="#333" stroke-width="0.8"/>
  <path d="M55 563 C58 564 59 566 58 568 M55 574 C58 573 59 571 58 569" stroke="#111" stroke-width="1.5" fill="none"/>
  <path d="M54 561.5 L56.5 563.5 L54 565 Z M54 572 L56.5 574 L54 575.5 Z" fill="#111"/>
 </g>
</svg>
<div class="a" style="left:44px;top:338px;font-family:'Liberation Serif',serif;font-weight:normal;font-size:20px;line-height:20px;color:#111">T</div>

</body></html>
